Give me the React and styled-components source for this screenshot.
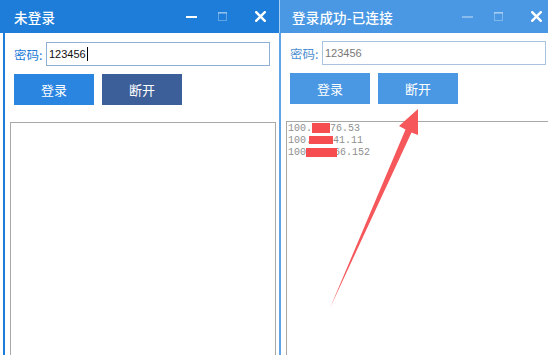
import React from 'react';
import styled, { createGlobalStyle, css } from 'styled-components';

const GlobalStyle = createGlobalStyle`
  html, body {
    margin: 0;
    padding: 0;
    background: #ffffff;
    overflow: hidden;
  }
  body {
    font-family: "Noto Sans CJK SC", "Noto Sans", sans-serif;
  }
`;

const Page = styled.div`
  position: relative;
  display: flex;
  width: 548px;
  height: 355px;
  overflow: hidden;
`;

const Window = styled.div`
  flex-shrink: 0;
  width: ${p => p.$width}px;
  height: 355px;
  display: flex;
  flex-direction: column;
`;

const TitleBar = styled.div`
  height: 33px;
  flex-shrink: 0;
  display: flex;
  align-items: center;
  justify-content: space-between;
  padding-left: ${p => p.$active ? 14 : 12}px;
  background: ${p => p.$active ? '#1e7dd8' : '#4a98e3'};
  ${p => !p.$active && css`
    border-left: 1px solid #a9cdf1;
  `}
`;

const Title = styled.span`
  color: #ffffff;
  font-size: 13.5px;
  font-weight: 500;
  letter-spacing: 0.2px;
`;

const Controls = styled.div`
  display: flex;
  align-items: center;
  padding-right: 13px;
`;

const Ctrl = styled.svg`
  display: block;
  margin-right: ${p => p.$gap || 0}px;
`;

const Body = styled.div`
  flex: 1;
  display: flex;
  flex-direction: column;
  margin-left: ${p => p.$inset}px;
  border-left: 2px solid ${p => p.$active ? '#1e7dd8' : '#5ea4e6'};
  background: #ffffff;
`;

const FieldRow = styled.div`
  display: flex;
  align-items: center;
  margin-top: ${p => p.$top}px;
  padding-left: 9px;
`;

const Label = styled.span`
  width: 32px;
  font-size: 12.5px;
  color: ${p => p.$active ? '#1e7dd8' : '#4f8fcf'};
`;

const Field = styled.div`
  box-sizing: border-box;
  width: 224px;
  height: 24px;
  display: flex;
  align-items: center;
  padding-left: 2px;
  border: 1px solid ${p => p.$active ? '#8eb0d6' : '#a9c3df'};
  font-family: "Liberation Sans", Arial, sans-serif;
  font-size: 11px;
  color: ${p => p.$active ? '#111111' : '#777777'};
`;

const Caret = styled.span`
  display: inline-block;
  width: 1px;
  height: 14px;
  margin-left: 1px;
  background: #000000;
`;

const ButtonRow = styled.div`
  display: flex;
  gap: 8px;
  margin-top: 8px;
  padding-left: 9px;
`;

const Button = styled.button`
  width: 80px;
  height: 31px;
  border: none;
  padding: 0;
  color: #ffffff;
  font-family: "Noto Sans CJK SC", "Noto Sans", sans-serif;
  font-size: 13px;
  background: ${p => p.$tone === 'dark' ? '#3d5f99' : p.$tone === 'soft' ? '#4a98e3' : '#2a85e0'};
`;

const LogBox = styled.div`
  flex: 1;
  margin: 17px 3px 0 5px;
  border: 1px solid #a8a8a8;
  border-bottom: none;
  padding: 1px 0 0 1px;
  font-family: "Liberation Mono", "DejaVu Sans Mono", monospace;
  font-size: 10px;
  line-height: 12px;
  color: #8f8f8f;
`;

const LogLine = styled.div`
  white-space: pre;
`;

const Redact = styled.span`
  position: relative;
  z-index: 1;
  display: inline-block;
  vertical-align: middle;
  width: ${p => p.$w}px;
  height: ${p => p.$h}px;
  margin-left: ${p => p.$ml}px;
  margin-right: ${p => p.$mr || 0}px;
  background: #f54d50;
`;

const Overlay = styled.svg`
  position: absolute;
  left: 0;
  top: 0;
  pointer-events: none;
`;

const WindowControls = ({ active }) => (
  <Controls>
    <Ctrl width="11" height="4" viewBox="0 0 11 4" $gap={21}>
      <rect x="0" y="1" width="11" height="2" fill="#ffffff" opacity={active ? 1 : 0.35} />
    </Ctrl>
    <Ctrl width="9" height="9" viewBox="0 0 9 9" $gap={28}>
      <rect x="0.5" y="0.5" width="8" height="8" fill="none" stroke="#ffffff" opacity="0.3" />
      <rect x="0" y="0" width="9" height="2" fill="#ffffff" opacity="0.3" />
    </Ctrl>
    <Ctrl width="11" height="11" viewBox="0 0 11 11">
      <path d="M1.2 1.2 L9.8 9.8 M9.8 1.2 L1.2 9.8" stroke="#ffffff" strokeWidth="2.4" strokeLinecap="square" />
    </Ctrl>
  </Controls>
);

const App = () => {
  return (
    <Page>
      <GlobalStyle />
      <Window $width={279}>
        <TitleBar $active>
          <Title>未登录</Title>
          <WindowControls active />
        </TitleBar>
        <Body $inset={3} $active>
          <FieldRow $top={9}>
            <Label $active>密码:</Label>
            <Field $active>123456<Caret /></Field>
          </FieldRow>
          <ButtonRow>
            <Button>登录</Button>
            <Button $tone="dark">断开</Button>
          </ButtonRow>
          <LogBox />
        </Body>
      </Window>

      <Window $width={276}>
        <TitleBar>
          <Title>登录成功-已连接</Title>
          <WindowControls />
        </TitleBar>
        <Body $inset={0}>
          <FieldRow $top={8}>
            <Label>密码:</Label>
            <Field>123456</Field>
          </FieldRow>
          <ButtonRow>
            <Button $tone="soft">登录</Button>
            <Button $tone="soft">断开</Button>
          </ButtonRow>
          <LogBox>
            <LogLine>100.<Redact $w={18} $h={10} $ml={0} />76.53</LogLine>
            <LogLine>100.<Redact $w={24} $h={8} $ml={-3} />41.11</LogLine>
            <LogLine>100<Redact $w={31} $h={9} $ml={0} $mr={-3} />66.152</LogLine>
          </LogBox>
        </Body>
      </Window>

      <Overlay width="548" height="355" viewBox="0 0 548 355">
        <polygon
          points="418,109 399,126 405.5,129.5 330,308 411.5,132.5 418,135"
          fill="#f5575a"
        />
      </Overlay>
    </Page>
  );
};

export default App;
